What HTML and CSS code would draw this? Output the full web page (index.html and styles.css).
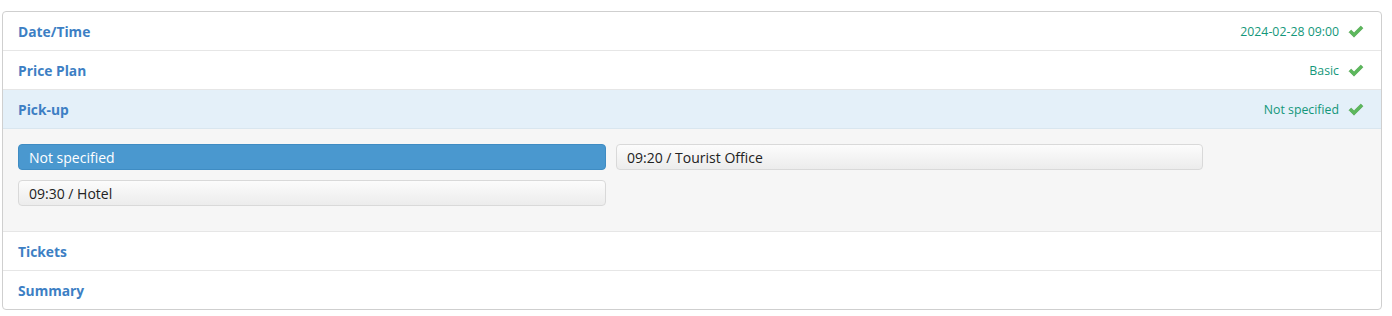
FILE: index.html
```html
<!DOCTYPE html>
<html>
  <head>
    <meta name="viewport" content="width=device-width, initial-scale=1" />
    <title>Booking steps</title>
    <link rel="stylesheet" href="styles.css">
  </head>
  <body>
    <div class="steps">
      <section class="step">
        <div class="step-head">
          <span class="step-title">Date/Time</span>
          <span class="step-value">2024-02-28 09:00</span>
          <svg class="check" viewBox="0 0 16 13" width="16" height="13"><path d="M1 7.2 3.2 5 6 7.8 12.8 1 15 3.2 6 12.2Z"/></svg>
        </div>
      </section>
      <section class="step">
        <div class="step-head">
          <span class="step-title">Price Plan</span>
          <span class="step-value">Basic</span>
          <svg class="check" viewBox="0 0 16 13" width="16" height="13"><path d="M1 7.2 3.2 5 6 7.8 12.8 1 15 3.2 6 12.2Z"/></svg>
        </div>
      </section>
      <section class="step open">
        <div class="step-head">
          <span class="step-title">Pick-up</span>
          <span class="step-value">Not specified</span>
          <svg class="check" viewBox="0 0 16 13" width="16" height="13"><path d="M1 7.2 3.2 5 6 7.8 12.8 1 15 3.2 6 12.2Z"/></svg>
        </div>
        <div class="step-body">
          <div class="options">
            <button class="option selected">Not specified</button>
            <button class="option">09:20 / Tourist Office</button>
            <button class="option">09:30 / Hotel</button>
          </div>
        </div>
      </section>
      <section class="step">
        <div class="step-head">
          <span class="step-title">Tickets</span>
        </div>
      </section>
      <section class="step">
        <div class="step-head">
          <span class="step-title">Summary</span>
        </div>
      </section>
    </div>
  </body>
</html>
```

FILE: styles.css
```css
body {
  margin: 11px 10px 0 2px;
  font-family: "Open Sans", sans-serif;
  background: #fff;
}

.steps {
  border: 1px solid #cfcfcf;
  border-radius: 4px;
  overflow: hidden;
}

.step + .step {
  border-top: 1px solid #e6e6e6;
}

.step-head {
  display: flex;
  align-items: center;
  height: 38px;
  padding: 0 17px 0 15px;
}

.step.open .step-head {
  background: #e4f0f9;
  border-bottom: 1px solid #d9e6ef;
}

.step-title {
  flex: 1;
  font-size: 13.8px;
  font-weight: 700;
  color: #3d7fc4;
}

.step-value {
  font-size: 12.3px;
  color: #13977a;
  margin-right: 9px;
}

.check {
  fill: #5cb85c;
  stroke: #4a9f4a;
  stroke-width: 0.6;
}

/* Open step content */
.step-body {
  background: #f6f6f6;
  padding: 15px 15px 25px;
}

.options {
  display: grid;
  grid-template-columns: 588px 587px;
  gap: 10px 10px;
}

.option {
  height: 26px;
  padding: 0 10px;
  text-align: left;
  font-family: "Open Sans", sans-serif;
  font-size: 14px;
  color: #222;
  border: 1px solid #d9d9d9;
  border-radius: 4px;
  background: linear-gradient(#fcfcfc, #ececec);
}

.option.selected {
  color: #fff;
  background: #4a98cf;
  border-color: #3f8cc3;
}
```
